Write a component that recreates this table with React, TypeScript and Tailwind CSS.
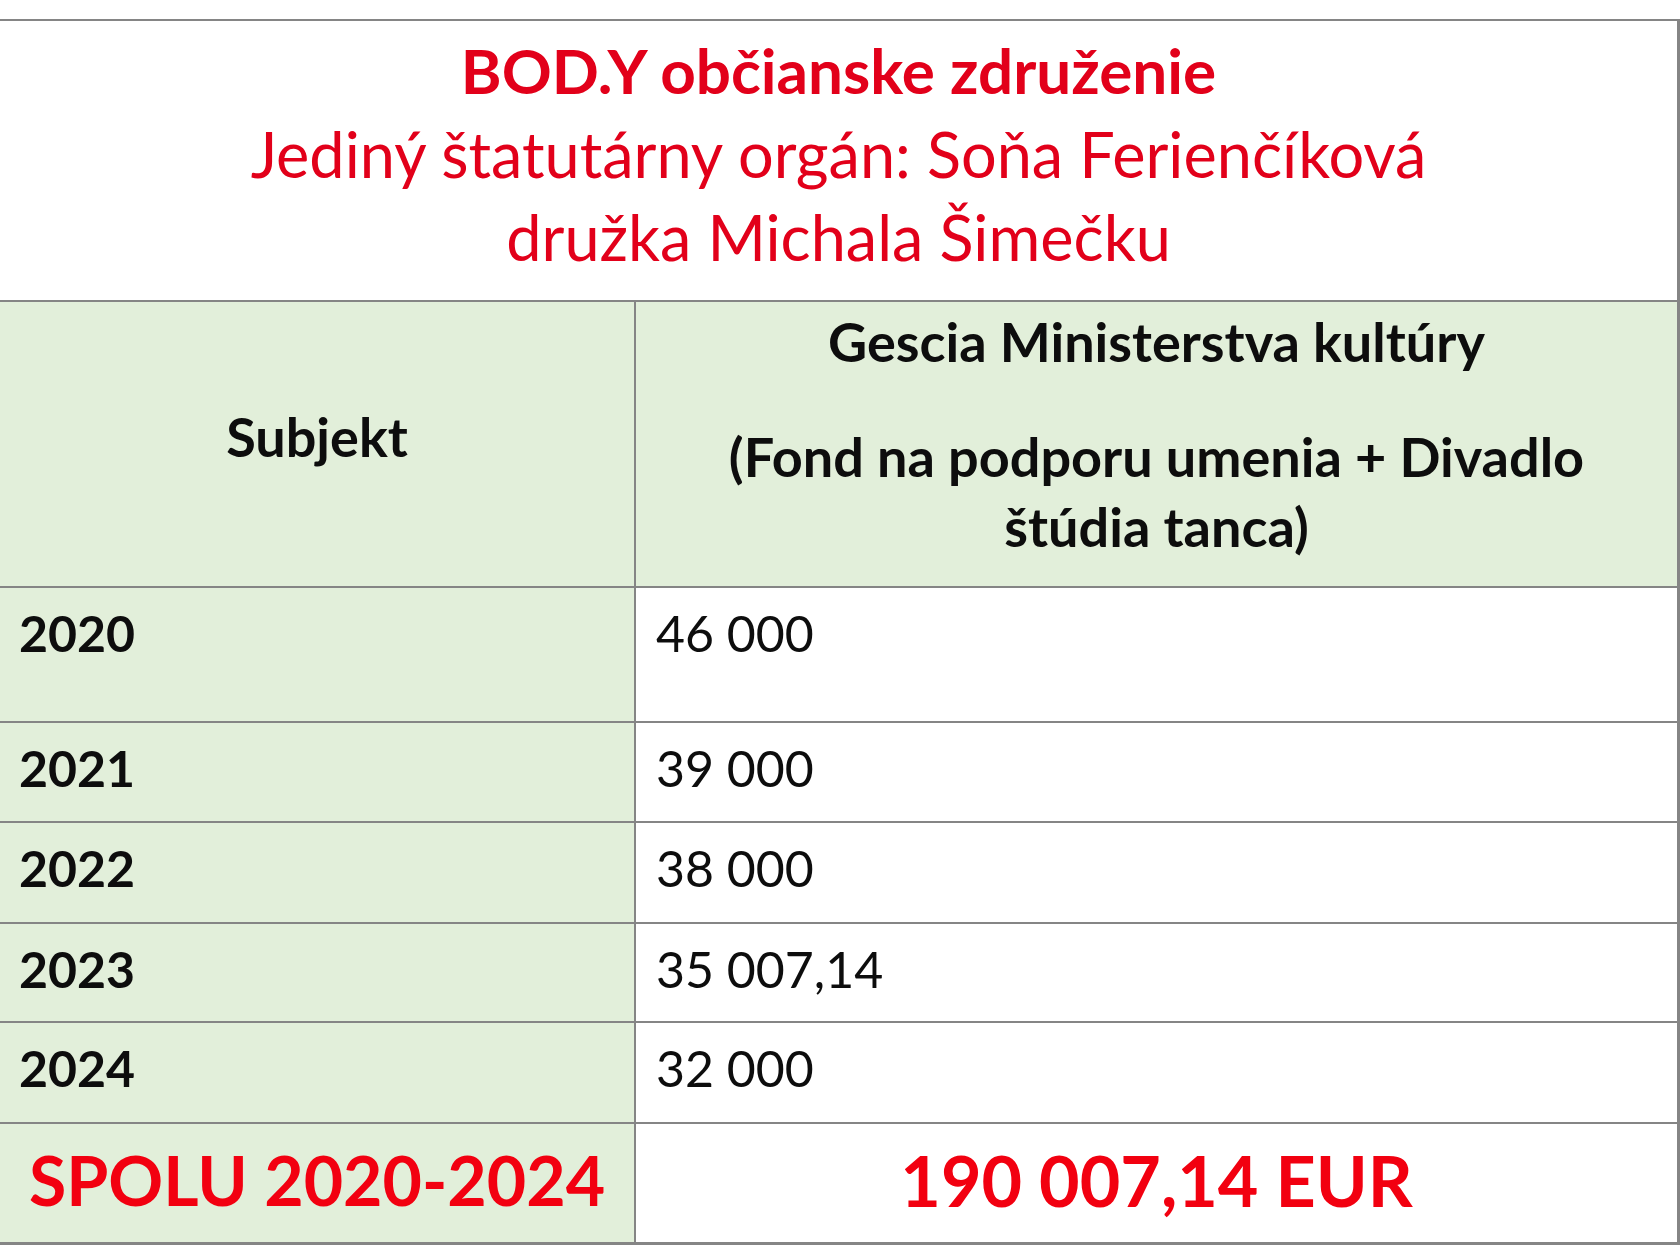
const FONT = "font-['Lato','Noto_Sans',sans-serif]";

type Row = { year: string; amount: string; h: string };

const rows: Row[] = [
  { year: '2020', amount: '46 000', h: 'h-[135px]' },
  { year: '2021', amount: '39 000', h: 'h-[100px]' },
  { year: '2022', amount: '38 000', h: 'h-[101px]' },
  { year: '2023', amount: '35 007,14', h: 'h-[99px]' },
  { year: '2024', amount: '32 000', h: 'h-[101px]' },
];

export default function App() {
  return (
    <div className={`w-[1680px] h-[1260px] bg-white pt-[19px] ${FONT}`}>
      <div className="w-[1680px] border-t-2 border-r-[3px] border-[#858585]">
        {/* Title block */}
        <div className="h-[281px] border-b-2 border-[#858585] pt-[8px] text-center text-[#e2001a] text-[63px] leading-[83px]">
          <div className="font-bold text-[62px]">BOD.Y občianske združenie</div>
          <div>Jediný štatutárny orgán: Soňa Ferienčíková</div>
          <div>družka Michala Šimečku</div>
        </div>

        {/* Header row */}
        <div className="grid grid-cols-[636px_1fr] h-[286px] border-b-2 border-[#858585] text-[#0d0d0d] font-bold text-[54px]">
          <div className="bg-[#e2efda] border-r-2 border-[#858585] flex items-center justify-center pb-[14px] leading-[60px]">
            Subjekt
          </div>
          <div className="bg-[#e2efda] pt-[5px] text-center leading-[70px]">
            <div className="mb-[45px]">Gescia Ministerstva kultúry</div>
            <div>(Fond na podporu umenia + Divadlo</div>
            <div>štúdia tanca)</div>
          </div>
        </div>

        {/* Data rows */}
        {rows.map((r) => (
          <div
            key={r.year}
            className={`grid grid-cols-[636px_1fr] ${r.h} border-b-2 border-[#858585] text-[50px] leading-[60px] text-[#0d0d0d]`}
          >
            <div className="bg-[#e2efda] border-r-2 border-[#858585] pl-[19px] pt-[15px] font-bold">
              {r.year}
            </div>
            <div className="bg-white pl-[20px] pt-[15px]">{r.amount}</div>
          </div>
        ))}

        {/* Total row */}
        <div className="grid grid-cols-[636px_1fr] h-[121px] border-b-[3px] border-[#858585] text-[#f20010] font-bold leading-[80px]">
          <div className="bg-[#e2efda] border-r-2 border-[#858585] flex items-center justify-center pb-[6px] text-[68px]">
            SPOLU 2020-2024
          </div>
          <div className="bg-white flex items-center justify-center pb-[6px] text-[70px]">190 007,14 EUR</div>
        </div>
      </div>
    </div>
  );
}
